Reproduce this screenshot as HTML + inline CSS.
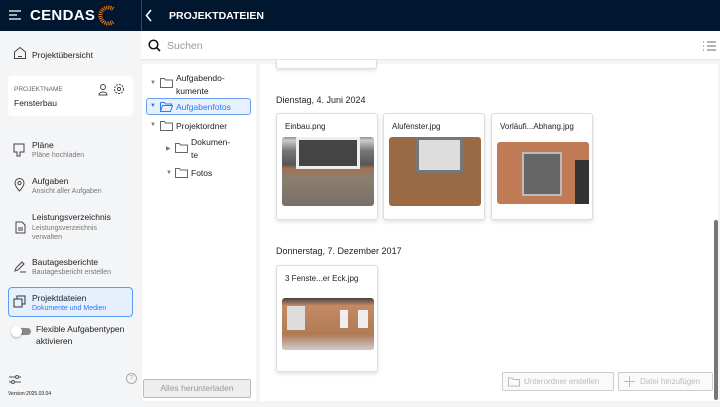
<!DOCTYPE html>
<html><head><meta charset="utf-8"><style>
*{box-sizing:border-box;margin:0;padding:0}
body{width:720px;height:407px;overflow:hidden;background:#f3f4f6;font-family:"Liberation Sans",sans-serif;color:#222;position:relative}
.hdr{position:absolute;left:0;top:0;width:720px;height:31px;background:#011730}
.abs{position:absolute}
.side{position:absolute;left:0;top:31px;width:141px;height:376px;background:#f4f5f7}
.t{font-size:8.5px;color:#222}
.s{font-size:7px;color:#777}
.card{position:absolute;width:102px;height:107px;background:#fff;border:1px solid #ddd;border-radius:3px;box-shadow:0 2px 4px rgba(0,0,0,.12)}
.card .n{position:absolute;left:8px;top:8px;font-size:8px}
.card .im{position:absolute;left:5px;top:23px;width:92px;height:69px;border-radius:3px}
.btn{position:absolute;height:19px;border:1px solid #ccc;border-radius:2px;font-size:8px;color:#bbb;background:#fafafa;line-height:17px}
</style></head><body>
<div class="hdr">
 <svg class="abs" style="left:9px;top:10px" width="12" height="10"><path d="M0 1h12M0 5h8M0 9h12" stroke="#fff" stroke-width="1.3"/></svg>
 <div class="abs" style="left:30px;top:7px;color:#fff;font-weight:bold;font-size:15px;letter-spacing:.3px">CENDAS</div>
 <svg class="abs" style="left:98px;top:5px" width="20" height="21"><path d="M15 4A8 8 0 1 0 15 17" fill="none" stroke="#e87a1e" stroke-width="4" stroke-dasharray="1 1"/></svg>
 <div class="abs" style="left:141px;top:0;width:1px;height:31px;background:#3a4a60"></div>
 <svg class="abs" style="left:145px;top:9px" width="8" height="13"><path d="M6 1L1.5 6.5L6 12" fill="none" stroke="#fff" stroke-width="1.6"/></svg>
 <div class="abs" style="left:169px;top:10px;color:#fff;font-weight:bold;font-size:10.5px">PROJEKTDATEIEN</div>
</div>
<div class="side">
 <svg class="abs" style="left:13px;top:15px" width="14" height="14"><path d="M1.5 6L7 1.5 12.5 6V12.5H1.5Z M5 10.5h4" fill="none" stroke="#444" stroke-width="1"/></svg>
 <div class="abs t" style="left:32px;top:19px">Projektübersicht</div>
 <div class="abs" style="left:8px;top:45px;width:125px;height:40px;background:#fff;border-radius:4px"></div>
 <div class="abs" style="left:14px;top:55px;font-size:6.5px;color:#666">PROJEKTNAME</div>
 <div class="abs t" style="left:14px;top:67px">Fensterbau</div>
 <svg class="abs" style="left:98px;top:52px" width="28" height="13"><circle cx="5" cy="4" r="2.5" fill="none" stroke="#444"/><path d="M1 12c0-4 8-4 8 0z" fill="none" stroke="#444"/><circle cx="21" cy="6" r="4.5" fill="none" stroke="#444" stroke-dasharray="2 1"/><circle cx="21" cy="6" r="1.6" fill="none" stroke="#444"/></svg>
 <svg class="abs" style="left:13px;top:112px" width="12" height="14"><path d="M1 1h10v8H7v4H4V9H1z" fill="none" stroke="#444"/></svg>
 <div class="abs t" style="left:32px;top:109px">Pläne</div><div class="abs s" style="left:32px;top:121px">Pläne hochladen</div>
 <svg class="abs" style="left:14px;top:147px" width="11" height="14"><path d="M5.5 13C1 8 1 6 1 5a4.5 4.5 0 0 1 9 0c0 1 0 3-4.5 8z" fill="none" stroke="#444"/><circle cx="5.5" cy="5" r="1.6" fill="none" stroke="#444"/></svg>
 <div class="abs t" style="left:32px;top:145px">Aufgaben</div><div class="abs s" style="left:32px;top:157px">Ansicht aller Aufgaben</div>
 <svg class="abs" style="left:15px;top:190px" width="11" height="13"><path d="M1 1h6l3 3v8H1z M3 7h5M3 9h5" fill="none" stroke="#444"/></svg>
 <div class="abs t" style="left:32px;top:181px">Leistungsverzeichnis</div><div class="abs s" style="left:32px;top:193px;line-height:9px">Leistungsverzeichnis<br>verwalten</div>
 <svg class="abs" style="left:14px;top:229px" width="13" height="13"><path d="M1 11l1-3 6-6 2 2-6 6z M6 12h6" fill="none" stroke="#444"/></svg>
 <div class="abs t" style="left:32px;top:226px">Bautagesberichte</div><div class="abs s" style="left:32px;top:238px">Bautagesbericht erstellen</div>
 <div class="abs" style="left:8px;top:256px;width:125px;height:30px;background:#e6effc;border:1px solid #5b9bf5;border-radius:4px"></div>
 <svg class="abs" style="left:13px;top:264px" width="13" height="13"><rect x="1" y="4" width="8" height="8" fill="none" stroke="#333"/><path d="M4 4V1h8v8H9" fill="none" stroke="#333"/></svg>
 <div class="abs t" style="left:32px;top:262px">Projektdateien</div><div class="abs" style="left:32px;top:274px;font-size:7px;color:#2f7af0">Dokumente und Medien</div>
 <div class="abs" style="left:12px;top:297px;width:19px;height:7px;border-radius:4px;background:#888"></div>
 <div class="abs" style="left:11px;top:295px;width:11px;height:11px;border-radius:50%;background:#fff;box-shadow:0 1px 2px rgba(0,0,0,.3)"></div>
 <div class="abs" style="left:36px;top:292px;font-size:8.5px;line-height:12px">Flexible Aufgabentypen<br>aktivieren</div>
 <svg class="abs" style="left:9px;top:343px" width="12" height="11"><path d="M0 3h12M0 8h12" stroke="#555"/><circle cx="8" cy="3" r="1.5" fill="#f4f5f7" stroke="#555"/><circle cx="4" cy="8" r="1.5" fill="#f4f5f7" stroke="#555"/></svg>
 <div class="abs" style="left:126px;top:342px;width:11px;height:11px;border:1px solid #aaa;border-radius:50%;font-size:7px;color:#aaa;text-align:center;line-height:9px">?</div>
 <div class="abs" style="left:8px;top:360px;font-size:5px">Version:2025.03.04</div>
</div>
<div class="abs" style="left:141px;top:31px;width:579px;height:29px;background:#fff;border-bottom:1px solid #e6e6e6"></div>
<svg class="abs" style="left:148px;top:39px" width="13" height="13"><circle cx="5.5" cy="5.5" r="4.3" fill="none" stroke="#111" stroke-width="1.5"/><path d="M8.5 8.5L12 12" stroke="#111" stroke-width="1.6"/></svg>
<div class="abs" style="left:167px;top:40px;font-size:10.5px;color:#999">Suchen</div>
<svg class="abs" style="left:703px;top:41px" width="13" height="11"><path d="M0 1h1M0 5h1M0 9h1M4 1h9M4 5h9M4 9h9" stroke="#888" stroke-width="1.2"/></svg>
<div class="abs" style="left:142px;top:64px;width:114px;height:337px;background:#fff"></div>
<div class="abs" style="left:150px;top:80px;font-size:6px;color:#777">▼</div>
<svg class="abs" style="left:160px;top:77px" width="13" height="11"><path d="M.5 1.5h4l1 1.5h7v7.5H.5z" fill="none" stroke="#666"/></svg>
<div class="abs" style="left:176px;top:72px;font-size:8.5px;line-height:13px">Aufgabendo-<br>kumente</div>
<div class="abs" style="left:146px;top:98px;width:105px;height:17px;background:#e8f0fd;border:1px solid #6aa2f3;border-radius:3px"></div>
<div class="abs" style="left:150px;top:103px;font-size:6px;color:#2f7af0">▼</div>
<svg class="abs" style="left:160px;top:101px" width="13" height="11"><path d="M.5 1.5h4l1 1.5h6v2M.5 10.5V1.5M.5 10.5l2-6h10l-2 6z" fill="none" stroke="#2f7af0"/></svg>
<div class="abs" style="left:176px;top:102px;font-size:8.5px;color:#2f7af0">Aufgabenfotos</div>
<div class="abs" style="left:150px;top:122px;font-size:6px;color:#777">▼</div>
<svg class="abs" style="left:160px;top:120px" width="13" height="11"><path d="M.5 1.5h4l1 1.5h7v7.5H.5z" fill="none" stroke="#666"/></svg>
<div class="abs" style="left:176px;top:121px;font-size:8.5px">Projektordner</div>
<div class="abs" style="left:166px;top:145px;font-size:6px;color:#777">▶</div>
<svg class="abs" style="left:175px;top:142px" width="13" height="11"><path d="M.5 1.5h4l1 1.5h7v7.5H.5z" fill="none" stroke="#666"/></svg>
<div class="abs" style="left:191px;top:136px;font-size:8.5px;line-height:13px">Dokumen-<br>te</div>
<div class="abs" style="left:166px;top:170px;font-size:6px;color:#777">▼</div>
<svg class="abs" style="left:175px;top:167px" width="13" height="11"><path d="M.5 1.5h4l1 1.5h7v7.5H.5z" fill="none" stroke="#666"/></svg>
<div class="abs" style="left:191px;top:168px;font-size:8.5px">Fotos</div>
<div class="btn" style="left:143px;top:379px;width:108px;text-align:center;color:#999;background:#eee;border-color:#bbb;font-size:8.5px">Alles herunterladen</div>
<div class="abs" style="left:260px;top:64px;width:458px;height:337px;background:#fff"></div>
<div class="abs" style="left:276px;top:60px;width:101px;height:9px;background:#fff;border:1px solid #ddd;border-top:none;border-radius:0 0 3px 3px;box-shadow:0 2px 3px rgba(0,0,0,.1)"></div>
<div class="abs" style="left:276px;top:95px;font-size:9px">Dienstag, 4. Juni 2024</div>
<div class="card" style="left:276px;top:113px"><div class="n">Einbau.png</div><div class="im" style="background:linear-gradient(#b58a6a 0,#ccc 5%,#777 20%,#555 40%,#a27050 45%,#8a8070 60%,#7a6f66 100%)"><div style="position:absolute;left:14px;top:0;width:64px;height:32px;border:3px solid #eee;background:#444"></div></div></div>
<div class="card" style="left:383px;top:113px"><div class="n">Alufenster.jpg</div><div class="im" style="background:#9a6a45"><div style="position:absolute;left:27px;top:0;width:47px;height:36px;border:3px solid #777;background:#ddd"></div></div></div>
<div class="card" style="left:491px;top:113px"><div class="n">Vorläufi...Abhang.jpg</div><div class="im" style="background:#c07a55;top:28px;height:62px"><div style="position:absolute;left:25px;top:10px;width:40px;height:44px;background:#666;border:2px solid #bbb"></div><div style="position:absolute;left:78px;top:18px;width:14px;height:44px;background:#333"></div></div></div>
<div class="abs" style="left:276px;top:246px;font-size:9px">Donnerstag, 7. Dezember 2017</div>
<div class="card" style="left:276px;top:265px"><div class="n">3 Fenste...er Eck.jpg</div><div class="im" style="top:32px;height:52px;background:linear-gradient(#444 0,#c58a63 15%,#b07a55 70%,#ccc 100%)"><div style="position:absolute;left:5px;top:8px;width:18px;height:24px;background:#ddd"></div><div style="position:absolute;left:58px;top:12px;width:8px;height:18px;background:#eee"></div><div style="position:absolute;left:76px;top:12px;width:10px;height:18px;background:#eee"></div></div></div>
<div class="btn" style="left:502px;top:372px;width:112px;padding-left:21px">Unterordner erstellen</div>
<svg class="abs" style="left:508px;top:377px" width="12" height="10"><path d="M.5 1h4l1 1.5h6V9H.5z" fill="none" stroke="#bbb"/></svg>
<div class="btn" style="left:618px;top:372px;width:95px;padding-left:21px">Datei hinzufügen</div>
<svg class="abs" style="left:624px;top:376px" width="11" height="11"><path d="M5.5 0v11M0 5.5h11" stroke="#bbb"/></svg>
<div class="abs" style="left:714px;top:220px;width:4px;height:180px;background:#777;border-radius:2px"></div>
</body></html>
